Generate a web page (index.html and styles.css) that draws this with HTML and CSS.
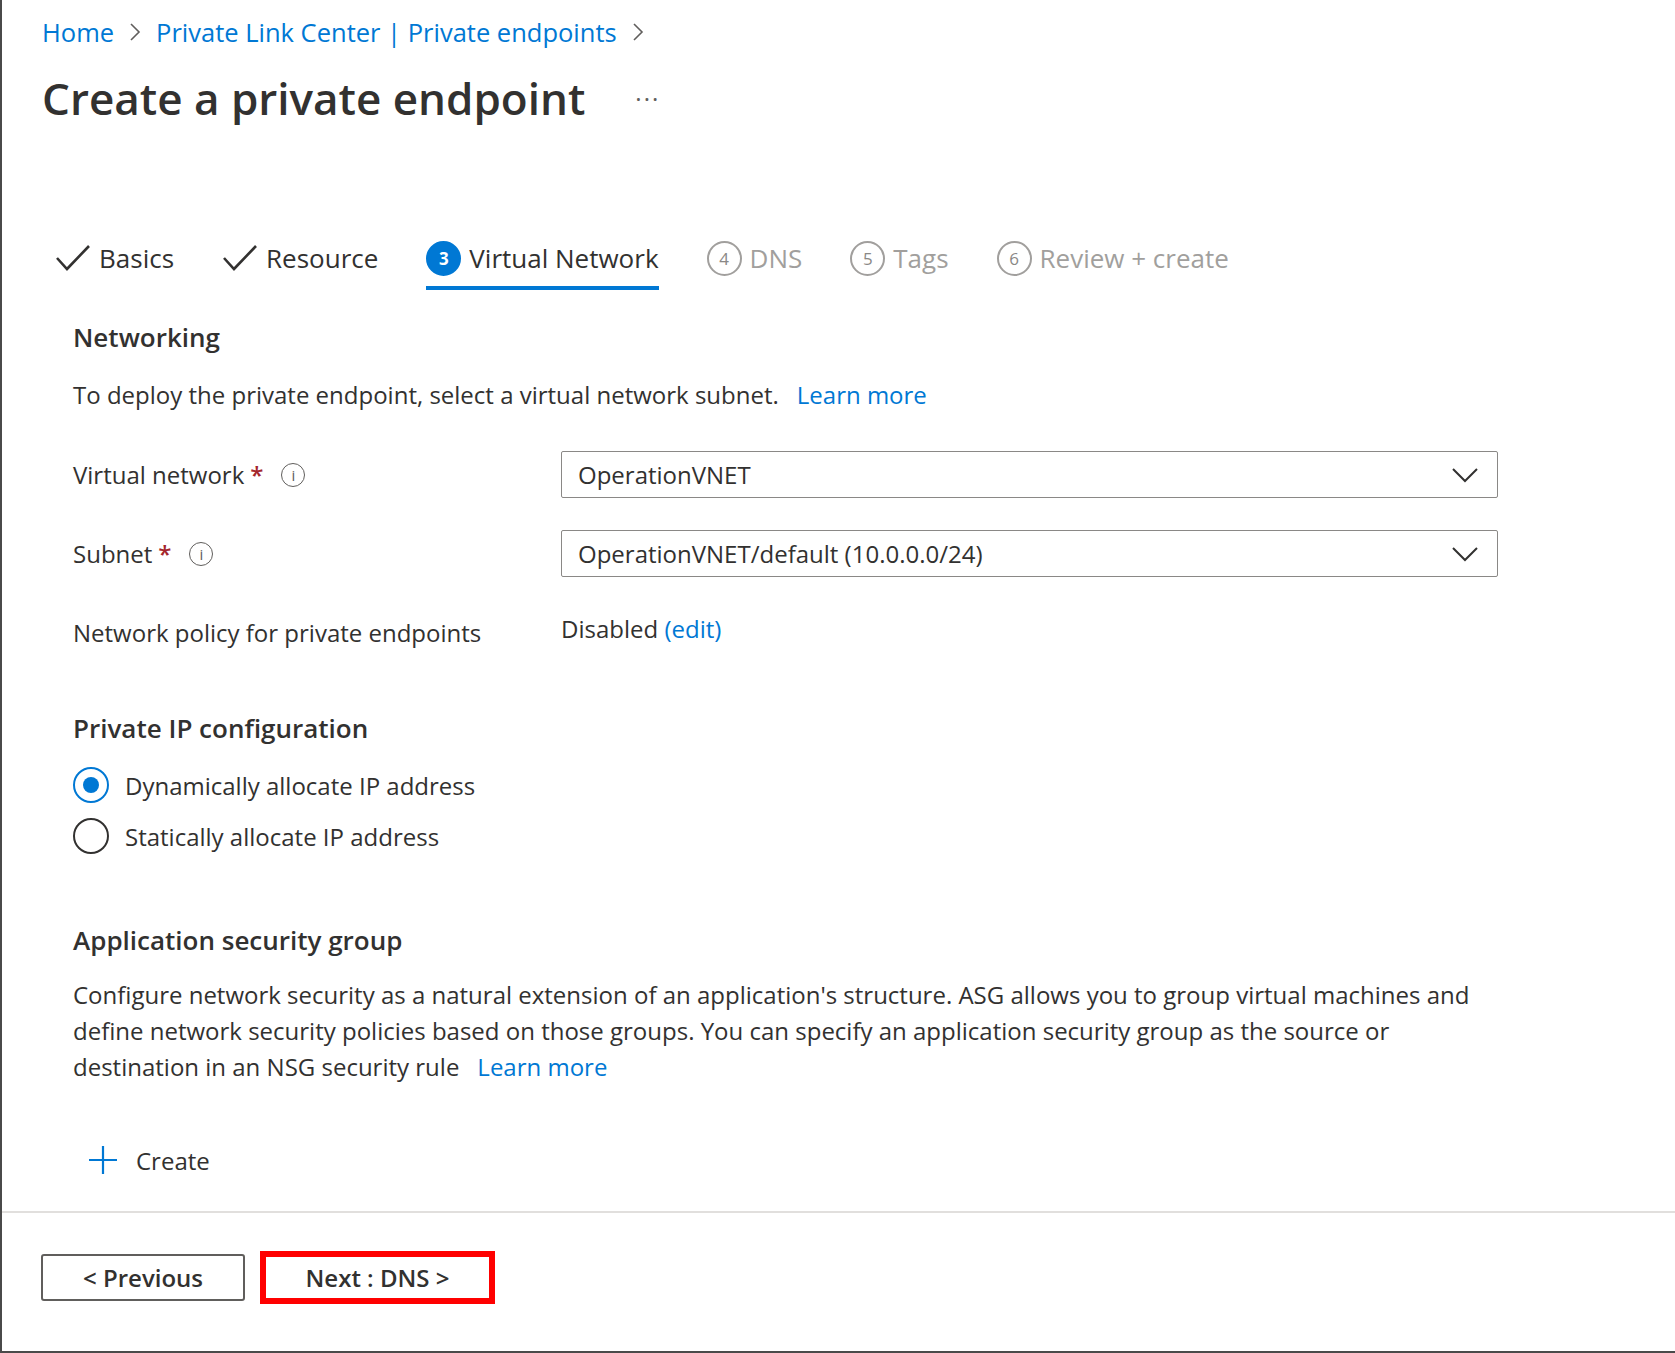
FILE: index.html
```html
<!DOCTYPE html>
<html lang="en">
  <head>
    <meta charset="UTF-8" />
    <meta name="viewport" content="width=device-width, initial-scale=1.0" />
    <title>Create a private endpoint</title>
    <link rel="stylesheet" href="styles.css">
  </head>
  <body>
    <div class="blade">
      <div class="header">
        <nav class="crumbs">
          <a href="#">Home</a>
          <svg class="crumb-sep" width="12" height="20" viewBox="0 0 12 20"><polyline points="2,2 10,10 2,18" fill="none" stroke="#605e5c" stroke-width="1.6"/></svg>
          <a href="#">Private Link Center | Private endpoints</a>
          <svg class="crumb-sep" width="12" height="20" viewBox="0 0 12 20"><polyline points="2,2 10,10 2,18" fill="none" stroke="#605e5c" stroke-width="1.6"/></svg>
        </nav>
        <div class="title-row">
          <h1>Create a private endpoint</h1>
          <span class="more">&middot;&middot;&middot;</span>
        </div>
      </div>

      <!-- Pasos del asistente -->
      <div class="tabs">
        <div class="tab done">
          <svg class="check" width="36" height="28" viewBox="0 0 36 28"><polyline points="2,14 12,25 34,2" fill="none" stroke="#323130" stroke-width="2.6"/></svg>
          <span>Basics</span>
        </div>
        <div class="tab done">
          <svg class="check" width="36" height="28" viewBox="0 0 36 28"><polyline points="2,14 12,25 34,2" fill="none" stroke="#323130" stroke-width="2.6"/></svg>
          <span>Resource</span>
        </div>
        <div class="tab active">
          <span class="step">3</span>
          <span>Virtual Network</span>
        </div>
        <div class="tab">
          <span class="step">4</span>
          <span>DNS</span>
        </div>
        <div class="tab">
          <span class="step">5</span>
          <span>Tags</span>
        </div>
        <div class="tab">
          <span class="step">6</span>
          <span>Review + create</span>
        </div>
      </div>

      <div class="content">
        <h2>Networking</h2>
        <p class="desc">To deploy the private endpoint, select a virtual network subnet.<a href="#" class="learn">Learn more</a></p>

        <div class="form">
          <div class="row">
            <div class="label">Virtual network <span class="req">*</span><span class="info">i</span></div>
            <div class="select">
              <span>OperationVNET</span>
              <svg width="28" height="16" viewBox="0 0 28 16"><polyline points="2,2 14,14 26,2" fill="none" stroke="#323130" stroke-width="2"/></svg>
            </div>
          </div>
          <div class="row">
            <div class="label">Subnet <span class="req">*</span><span class="info">i</span></div>
            <div class="select">
              <span>OperationVNET/default (10.0.0.0/24)</span>
              <svg width="28" height="16" viewBox="0 0 28 16"><polyline points="2,2 14,14 26,2" fill="none" stroke="#323130" stroke-width="2"/></svg>
            </div>
          </div>
          <div class="row plain">
            <div class="label">Network policy for private endpoints</div>
            <div class="value">Disabled <a href="#">(edit)</a></div>
          </div>
        </div>

        <h2 class="sec-ip">Private IP configuration</h2>
        <div class="radios">
          <label class="radio checked"><span class="dot"></span>Dynamically allocate IP address</label>
          <label class="radio"><span class="dot"></span>Statically allocate IP address</label>
        </div>

        <h2 class="sec-asg">Application security group</h2>
        <p class="para">Configure network security as a natural extension of an application's structure. ASG allows you to group virtual machines and<br>define network security policies based on those groups. You can specify an application security group as the source or<br>destination in an NSG security rule<a href="#" class="learn">Learn more</a></p>

        <div class="create">
          <svg width="30" height="30" viewBox="0 0 30 30"><path d="M15 1 V29 M1 15 H29" stroke="#0078d4" stroke-width="2.2"/></svg>
          <span>Create</span>
        </div>
      </div>

      <div class="footer">
        <button class="btn">&lt; Previous</button>
        <button class="btn next">Next : DNS &gt;</button>
      </div>
    </div>
  </body>
</html>
```

FILE: styles.css
```css
body {
  margin: 0;
  padding: 0;
  background-color: #ffffff;
  font-family: "Open Sans", "Noto Sans", sans-serif;
  color: #323130;
}

a {
  color: #0078d4;
  text-decoration: none;
}

.blade {
  width: 1675px;
  height: 1353px;
  box-sizing: border-box;
  border-left: 2px solid #4a4a4a;
  border-bottom: 2px solid #4a4a4a;
  overflow: hidden;
}

/* Cabecera */
.header {
  padding: 14px 0 0 40px;
}

.crumbs {
  display: flex;
  align-items: center;
  height: 36px;
  font-size: 25.5px;
  gap: 13px;
}

.crumb-sep {
  margin: 0 2px;
}

.title-row {
  display: flex;
  align-items: center;
  margin-top: 20px;
  height: 56px;
}

h1 {
  margin: 0;
  font-size: 44px;
  font-weight: 600;
  line-height: 56px;
}

.more {
  margin-left: 50px;
  font-size: 24px;
  color: #605e5c;
  letter-spacing: 2px;
}

/* Pestañas */
.tabs {
  display: flex;
  gap: 48px;
  margin-top: 104px;
  padding-left: 53px;
  font-size: 26px;
}

.tab {
  display: flex;
  align-items: center;
  gap: 8px;
  height: 56px;
  border-bottom: 4px solid transparent;
  color: #a19f9d;
}

.tab.done,
.tab.active {
  color: #323130;
}

.tab.active {
  border-bottom-color: #0078d4;
}

.step {
  display: flex;
  align-items: center;
  justify-content: center;
  width: 31px;
  height: 31px;
  border: 2px solid #a19f9d;
  border-radius: 50%;
  font-size: 17px;
  color: #8a8886;
}

.tab.active .step {
  background-color: #0078d4;
  border-color: #0078d4;
  color: #ffffff;
  font-weight: 700;
}

/* Contenido */
.content {
  padding-left: 71px;
  font-size: 24px;
}

h2 {
  margin: 27px 0 0 0;
  font-size: 26px;
  font-weight: 600;
  line-height: 40px;
}

.desc {
  margin: 18px 0 0 0;
  line-height: 40px;
}

.learn {
  margin-left: 18px;
}

.form {
  display: flex;
  flex-direction: column;
  gap: 32px;
  margin-top: 36px;
}

.row {
  display: flex;
  align-items: center;
  height: 47px;
}

.row.plain {
  align-items: flex-start;
  height: 40px;
}

.label {
  display: flex;
  align-items: center;
  width: 488px;
  flex-shrink: 0;
}

.row.plain .label {
  padding-top: 7px;
}

.req {
  color: #a4262c;
  margin-left: 6px;
  font-weight: 600;
}

.info {
  display: inline-flex;
  align-items: center;
  justify-content: center;
  width: 22px;
  height: 22px;
  margin-left: 18px;
  border: 1.5px solid #605e5c;
  border-radius: 50%;
  font-size: 15px;
  color: #605e5c;
}

.select {
  display: flex;
  align-items: center;
  justify-content: space-between;
  width: 937px;
  height: 47px;
  box-sizing: border-box;
  padding: 0 18px 0 16px;
  border: 1.5px solid #8a8886;
  border-radius: 2px;
}

.value {
  line-height: 40px;
}

.sec-ip {
  margin-top: 59px;
}

.radios {
  display: flex;
  flex-direction: column;
  gap: 11px;
  margin-top: 17px;
}

.radio {
  display: flex;
  align-items: center;
  height: 40px;
  gap: 16px;
}

.dot {
  width: 36px;
  height: 36px;
  box-sizing: border-box;
  border: 2px solid #323130;
  border-radius: 50%;
  display: flex;
  align-items: center;
  justify-content: center;
}

.radio.checked .dot {
  border-color: #0078d4;
}

.radio.checked .dot::after {
  content: "";
  width: 16px;
  height: 16px;
  border-radius: 50%;
  background-color: #0078d4;
}

.sec-asg {
  margin-top: 64px;
}

.para {
  margin: 17px 0 0 0;
  line-height: 36px;
}

.create {
  display: flex;
  align-items: center;
  gap: 18px;
  height: 40px;
  margin-top: 55px;
  padding-left: 15px;
}

/* Pie con botones */
.footer {
  display: flex;
  align-items: center;
  gap: 15px;
  margin-top: 31px;
  padding: 38px 0 0 39px;
  border-top: 2px solid #e1dfdd;
}

.btn {
  height: 47px;
  width: 204px;
  background-color: #ffffff;
  border: 2px solid #605e5c;
  border-radius: 3px;
  font-family: inherit;
  font-size: 24px;
  font-weight: 600;
  color: #323130;
}

.btn.next {
  width: 235px;
  height: 53px;
  border: 6px solid #ff0000;
  border-radius: 0;
}
```
